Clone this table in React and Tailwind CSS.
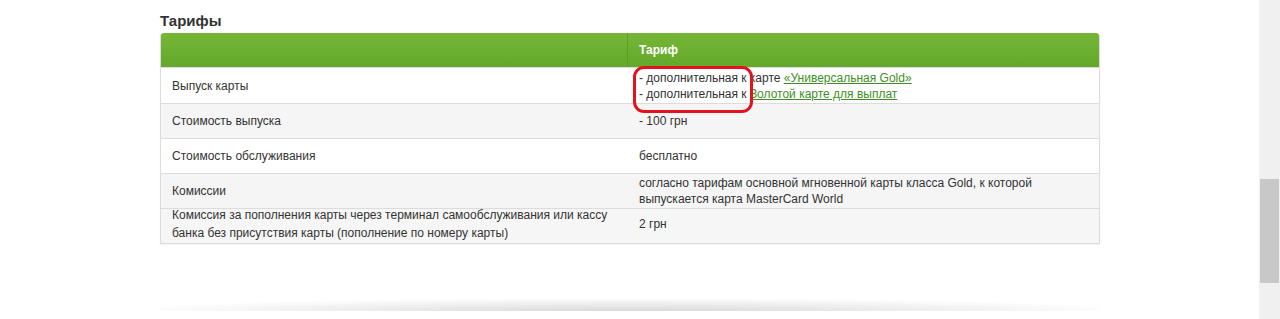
import React from 'react';

const rows = [
  {
    label: 'Выпуск карты',
    bg: 'bg-white',
    h: 'h-[36px]',
    value: (
      <>
        <div>
          - дополнительная к карте{' '}
          <a href="#" className="text-[#3f8f1f] underline">«Универсальная Gold»</a>
        </div>
        <div>
          - дополнительная к{' '}
          <a href="#" className="text-[#3f8f1f] underline">Золотой карте для выплат</a>
        </div>
      </>
    ),
    mark: true,
  },
  { label: 'Стоимость выпуска', bg: 'bg-[#f5f5f5]', h: 'h-[35px]', value: '- 100 грн' },
  { label: 'Стоимость обслуживания', bg: 'bg-white', h: 'h-[35px]', value: 'бесплатно' },
  {
    label: 'Комиссии',
    bg: 'bg-[#f5f5f5]',
    h: 'h-[35px]',
    value: 'согласно тарифам основной мгновенной карты класса Gold, к которой выпускается карта MasterCard World',
  },
  {
    label: 'Комиссия за пополнения карты через терминал самообслуживания или кассу банка без присутствия карты (пополнение по номеру карты)',
    bg: 'bg-[#f6f6f6]',
    h: 'h-[35px]',
    value: '2 грн',
    tall: true,
  },
];

const App = () => {
  return (
    <div className="flex w-[1280px] h-[319px] bg-white overflow-hidden text-[#333] font-['Liberation_Sans',Arial,sans-serif]">
      <div className="flex-1 pl-[160px] pt-[12px]">
        <h2 className="text-[15px] font-bold leading-[18px] h-[21px]">Тарифы</h2>
        <div className="w-[940px] border border-t-0 border-[#dcdcdc] rounded-t-[3px] shadow-[0_1px_2px_rgba(0,0,0,0.06)]">
          <div className="flex h-[34px] rounded-t-[3px] bg-gradient-to-b from-[#76b637] to-[#63a82a] text-white text-[12px] font-bold">
            <div className="w-[467px] border-r border-[#5c9c27]"></div>
            <div className="flex-1 flex items-center px-[11px]">Тариф</div>
          </div>
          {rows.map((row, i) => (
            <div
              key={i}
              className={`flex text-[12px] leading-[16px] ${row.bg} ${row.h} border-t border-[#dcdcdc] first-of-type:border-t-0`}
            >
              <div className={`w-[467px] flex items-center px-[11px] ${row.tall ? 'leading-[18px] pb-[4px]' : ''}`}>
                <div className="w-[445px]">{row.label}</div>
              </div>
              <div className={`relative flex-1 flex items-center px-[11px] ${row.tall ? 'pb-[4px]' : ''}`}>
                <div className="w-[440px]">{row.value}</div>
                {row.mark && (
                  <div className="absolute left-[5px] top-[-2px] w-[120px] h-[47px] border-[3px] border-[#e3121f] rounded-[11px]"></div>
                )}
              </div>
            </div>
          ))}
        </div>
        <div className="w-[940px] h-[13px] mt-[54px] bg-[radial-gradient(ellipse_55%_100%_at_50%_100%,#d9d9d9,#ffffff)]"></div>
      </div>
      <div className="w-[21px] h-full bg-[#f0f0f0] flex flex-col pt-[179px]">
        <div className="mx-[1px] h-[104px] bg-[#c8c8c8]"></div>
      </div>
    </div>
  );
};

export default App;
